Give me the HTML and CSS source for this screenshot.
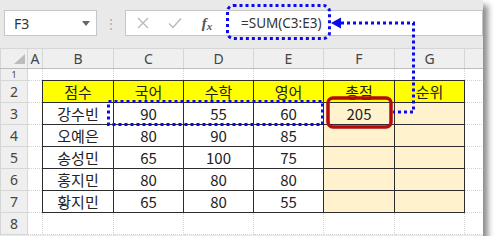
FILE: index.html
```html
<!DOCTYPE html>
<html lang="ko">
<head>
  <meta charset="UTF-8" />
  <title>SUM 함수 - 총점</title>
  <link rel="stylesheet" href="styles.css">
</head>
<body>

  <div class="window">
    <!-- name box + formula bar -->
    <div class="toolbar">
      <div class="name-box">
        <span>F3</span>
        <svg class="caret" width="8" height="5" viewBox="0 0 8 5"><path d="M0 0H8L4 5Z" fill="#666"/></svg>
      </div>
      <div class="sep">⋮</div>
      <div class="formula-box">
        <div class="fx-tools">
          <span class="tool"><svg width="12" height="12" viewBox="0 0 12 12"><path d="M1 1L11 11M11 1L1 11" stroke="#b9b9b9" stroke-width="1.4"/></svg></span>
          <span class="tool"><svg width="14" height="12" viewBox="0 0 14 12"><path d="M1 6.5L5 10.5L13 1.5" stroke="#b9b9b9" stroke-width="1.4" fill="none"/></svg></span>
          <span class="tool fx">f<small>x</small></span>
        </div>
        <div class="formula">=SUM(C3:E3)</div>
      </div>
    </div>

    <table class="sheet">
      <colgroup>
        <col style="width:27px"><col style="width:15px"><col style="width:71px"><col style="width:70px">
        <col style="width:70px"><col style="width:70px"><col style="width:71px"><col style="width:70px"><col style="width:19px">
      </colgroup>
      <tr class="col-head">
        <th class="corner"><svg width="11" height="10" viewBox="0 0 11 10"><path d="M11 0V10H0Z" fill="#bcbcbc"/></svg></th>
        <th>A</th><th>B</th><th>C</th><th>D</th><th>E</th><th>F</th><th>G</th><th></th>
      </tr>
      <tr class="row1">
        <th class="row-no"><div>1</div></th>
        <td></td><td></td><td></td><td></td><td></td><td></td><td></td><td></td>
      </tr>
      <tr>
        <th class="row-no">2</th>
        <td></td>
        <td class="t head">점수</td><td class="t head">국어</td><td class="t head">수학</td>
        <td class="t head">영어</td><td class="t head">총점</td><td class="t head">순위</td>
        <td></td>
      </tr>
      <tr>
        <th class="row-no">3</th>
        <td></td>
        <td class="t">강수빈</td><td class="t">90</td><td class="t">55</td><td class="t">60</td>
        <td class="t sum">205</td><td class="t sum"></td>
        <td></td>
      </tr>
      <tr>
        <th class="row-no">4</th>
        <td></td>
        <td class="t">오예은</td><td class="t">80</td><td class="t">90</td><td class="t">85</td>
        <td class="t sum"></td><td class="t sum"></td>
        <td></td>
      </tr>
      <tr>
        <th class="row-no">5</th>
        <td></td>
        <td class="t">송성민</td><td class="t">65</td><td class="t">100</td><td class="t">75</td>
        <td class="t sum"></td><td class="t sum"></td>
        <td></td>
      </tr>
      <tr>
        <th class="row-no">6</th>
        <td></td>
        <td class="t">홍지민</td><td class="t">80</td><td class="t">80</td><td class="t">80</td>
        <td class="t sum"></td><td class="t sum"></td>
        <td></td>
      </tr>
      <tr>
        <th class="row-no">7</th>
        <td></td>
        <td class="t">황지민</td><td class="t">65</td><td class="t">80</td><td class="t">55</td>
        <td class="t sum"></td><td class="t sum"></td>
        <td></td>
      </tr>
      <tr>
        <th class="row-no">8</th>
        <td></td><td></td><td></td><td></td><td></td><td></td><td></td><td></td>
      </tr>
    </table>
  </div>

  <!-- annotation marks drawn over the sheet -->
  <svg class="marks" width="500" height="251" viewBox="0 0 500 251">
    <g fill="none" stroke="#0a0aec" stroke-width="3" stroke-dasharray="3 3">
      <rect x="227.5" y="5.5" width="102" height="33" rx="6"/>
      <path d="M341 23H413.5V112H393"/>
      <rect x="108.5" y="101.5" width="214" height="23"/>
    </g>
    <path d="M331 23L341 17.5V28.5Z" fill="#0a0aec"/>
    <rect x="328" y="98" width="63" height="29" rx="5" fill="none" stroke="#b40c0c" stroke-width="3.5"/>
  </svg>

</body>
</html>
```

FILE: styles.css
```css
body {
  margin: 0;
  background: #fff;
  font-family: "Noto Sans", "Noto Sans CJK KR", sans-serif;
  position: relative;
}

.window {
  width: 483px;
  height: 236px;
  background: #e9e9e9;
  box-shadow: 5px 5px 6px rgba(0, 0, 0, 0.45);
  overflow: hidden;
}

.toolbar {
  display: flex;
  align-items: center;
  height: 26px;
  padding: 10px 0 12px 4px;
}

.name-box {
  width: 93px;
  height: 26px;
  box-sizing: border-box;
  background: #fff;
  border: 1px solid #c6c6c6;
  display: flex;
  align-items: center;
  justify-content: space-between;
  padding: 0 6px 0 9px;
  font-size: 14px;
  color: #333;
}

.sep {
  width: 28px;
  text-align: center;
  color: #b0b0b0;
  font-size: 14px;
}

.formula-box {
  width: 358px;
  height: 26px;
  box-sizing: border-box;
  background: #fff;
  border: 1px solid #c6c6c6;
  display: flex;
  align-items: center;
}

.fx-tools {
  width: 102px;
  display: flex;
  align-items: center;
  padding-left: 1px;
  box-sizing: border-box;
}

.tool {
  width: 32px;
  display: flex;
  justify-content: center;
}

.fx {
  font-family: "Liberation Serif", serif;
  font-style: italic;
  font-weight: bold;
  font-size: 15px;
  color: #555;
}

.fx small {
  font-size: 11px;
  align-self: flex-end;
}

.formula {
  padding-left: 13px;
  font-size: 13.5px;
  color: #333;
}

.sheet {
  border-collapse: collapse;
  table-layout: fixed;
  width: 483px;
  background: #fff;
}

.sheet th {
  background: #efefef;
  font-weight: normal;
  font-size: 14px;
  color: #444;
  padding: 0;
  border: 1px solid #d6d6d6;
}

.col-head th {
  height: 19px;
  border-bottom-color: #bdbdbd;
}

.corner {
  text-align: right;
  vertical-align: bottom;
}

.corner svg {
  display: block;
  margin: 0 2px 4px auto;
}

.row-no {
  border-right-color: #bdbdbd;
}

.sheet td {
  height: 21px;
  padding: 0;
  border: 1px dotted #d2d2d2;
  text-align: center;
  font-family: "Noto Sans CJK KR", sans-serif;
  font-size: 15px;
  color: #222;
}

.row1 td,
.row1 th {
  height: 11px;
}

.row1 th div {
  height: 11px;
  font-size: 9px;
  line-height: 11px;
}

.sheet td.t {
  border: 1px solid #2c2c2c;
}

.sheet td.head {
  background: #ffff00;
}

.sheet td.sum {
  background: #fff2cc;
}

.marks {
  position: absolute;
  top: 0;
  left: 0;
  pointer-events: none;
}
```
